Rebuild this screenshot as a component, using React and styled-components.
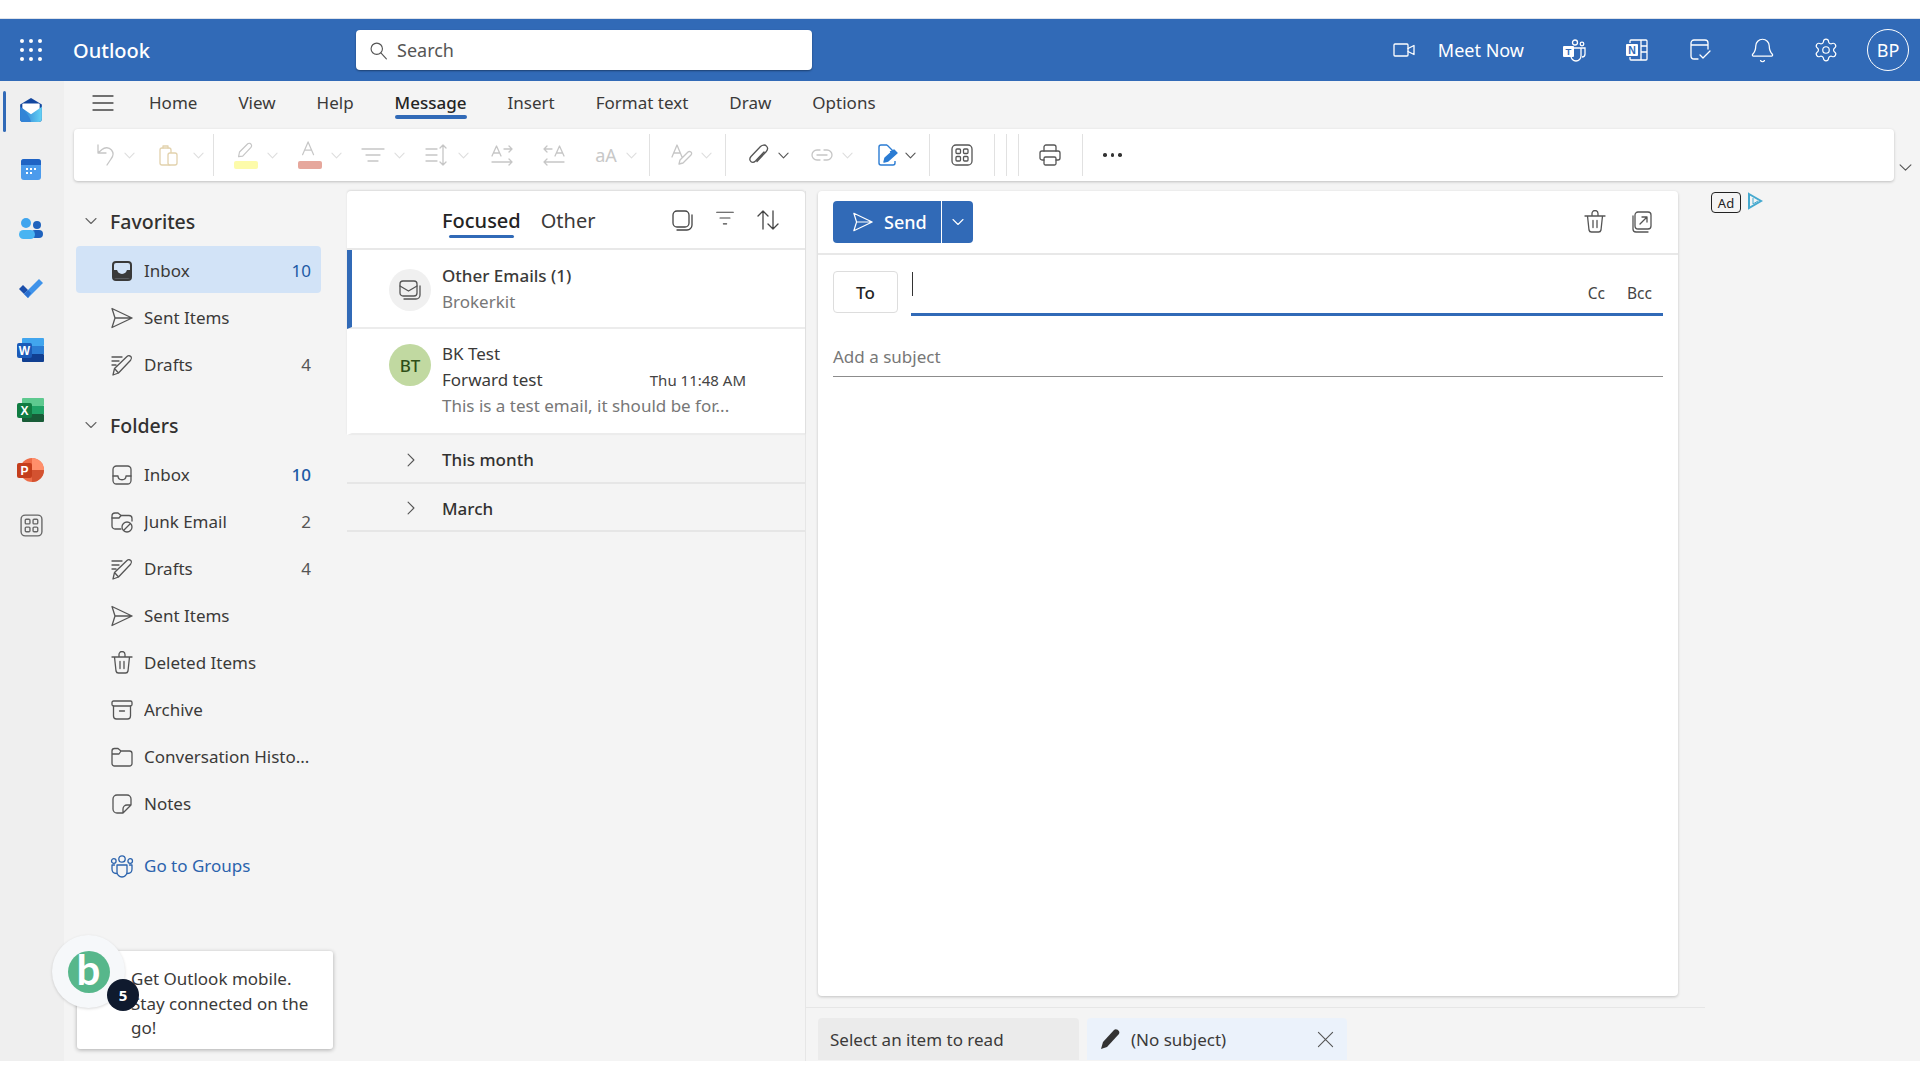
import React from 'react';
import styled, { createGlobalStyle } from 'styled-components';
import { Bell, Settings } from 'lucide-react';

const GlobalStyle = createGlobalStyle`
    html, body {
        margin: 0;
        padding: 0;
        background: #fff;
    }
    * {
        box-sizing: border-box;
    }
    #root {
        font-family: "Noto Sans", "Open Sans", "Liberation Sans", sans-serif;
        color: #323130;
    }
`;

const BLUE = '#316ab7';
const GRAY = '#c6c6c6';
const PALE = '#dedede';

// line icons, all on a 24 grid
const paths = {
    search: <><circle cx="10" cy="10" r="6.5" /><path d="M15 15l6 6.5" /></>,
    camera: <><rect x="2" y="6" width="14" height="12" rx="1" /><path d="M16 10.5l6-3v9l-6-3" /></>,
    menu: <path d="M2 5h20M2 12h20M2 19h20" />,
    chevDown: <path d="M2 7l10 10L22 7" />,
    chevRight: <path d="M7 2l10 10L7 22" />,
    close: <path d="M2 2l20 20M22 2L2 22" />,
    undo: <path d="M4 2v8h8M4 10l4-3.500c3-2.600 7-2.200 9.500.5 2.500 3 1.500 6.500-.5 9l-4 6" />,
    clipboard: <><rect x="3" y="5" width="11" height="17" rx="2" /><rect x="11" y="10" width="9" height="12" rx="2" fill="#fff" /><path d="M6 5V3h5v2" /></>,
    pen: <path d="M5 17l1-5L15 3c1.400-1.200 3.500-.2 4 1 .5 1 .2 2-.5 3L9.500 16.500z" />,
    fontA: <path d="M5 15L11 1l6 14M7 10h8" />,
    align: <path d="M1 6h22M5 12h14M7 18h10" />,
    spacing: <path d="M1 6h11M1 12h11M1 18h11M18 2v20M15 5l3-3 3 3M15 19l3 3 3-3" />,
    aRight: <path d="M2 13L6.500 3 11 13M3.500 10h6M14 6h8M19 3l3 3-3 3M2 19h20M19 16l3 3-3 3" />,
    aLeft: <path d="M13 13l4.500-10L22 13M14.500 10h6M10 6H2M5 3L2 6l3 3M2 19h20M5 16l-3 3 3 3" />,
    textStyle: <path d="M2 14L7 2l5 12M4 10h6M9 21l1-4 8-8c1.200-1 3-.4 3.500.8.300.8.200 1.600-.5 2.200l-8 8z" />,
    clip: <path d="M18 9l-8.500 9c-1.500 1.500-3.500 1.500-4.700.4C3.500 17 3.700 15 5 13.500L14.500 3.500c2-2 4.800-1.800 6-.4 1.300 1.400 1.300 3.800-.4 5.600L11 18.500" />,
    link: <><path d="M10 7H7a5 5 0 0 0 0 10h3M14 7h3a5 5 0 0 1 0 10h-3" /><path d="M7 12h10" /></>,
    apps: <><rect x="2" y="2" width="20" height="20" rx="4" /><rect x="6" y="6" width="4.500" height="4.500" rx="1" /><rect x="13.500" y="6" width="4.500" height="4.500" rx="1" /><rect x="6" y="13.500" width="4.500" height="4.500" rx="1" /><rect x="13.500" y="13.500" width="4.500" height="4.500" rx="1" /></>,
    print: <><path d="M6 8V4a2 2 0 0 1 2-2h8a2 2 0 0 1 2 2v4" /><path d="M6 17H4a2 2 0 0 1-2-2v-5a2 2 0 0 1 2-2h16a2 2 0 0 1 2 2v5a2 2 0 0 1-2 2h-2" /><rect x="6" y="14" width="12" height="8" rx="1.500" /></>,
    send: <path d="M2 2.500L22 12 2 21.500 5 12zM5 12h17" />,
    inbox: <><rect x="3" y="3" width="18" height="18" rx="3.500" /><path d="M3 13h5c0 5 8 5 8 0h5" /></>,
    drafts: <path d="M2 4h10M2 8h7M2 12h4M3 22l1.500-6.500L17 3.500c1.400-1.300 3.200-.8 4 .2.800 1.200.6 2.500-.4 3.500L8.500 20zM4.500 15.500l4 4.500" />,
    junk: <><path d="M11 19H5a3 3 0 0 1-3-3V6a3 3 0 0 1 3-3h3l3 2.500h8a3 3 0 0 1 3 3V11" /><circle cx="17" cy="17" r="5" /><path d="M14 20l6-6M2 8h7l2-2.500" /></>,
    trash: <path d="M2 6h20M9 6V3.500a3 3 0 0 1 6 0V6M4.500 6l1.500 14a2.500 2.500 0 0 0 2.500 2h7a2.500 2.500 0 0 0 2.500-2l1.500-14M10 10.500v7M14 10.500v7" />,
    archive: <><rect x="2" y="3" width="20" height="5" rx="1.500" /><path d="M3.500 8v10a3 3 0 0 0 3 3h11a3 3 0 0 0 3-3V8M9.500 13h5" /></>,
    folder: <path d="M2 6a2.500 2.500 0 0 1 2.500-2.500H8L11 6h8.500A2.500 2.500 0 0 1 22 8.500v10a2.500 2.500 0 0 1-2.500 2.500h-15A2.500 2.500 0 0 1 2 18.500zM2 9h7l2-3" />,
    note: <path d="M13 21H7a4 4 0 0 1-4-4V7a4 4 0 0 1 4-4h10a4 4 0 0 1 4 4v6zM21 13h-4a4 4 0 0 0-4 4v4" />,
    groups: <><circle cx="12" cy="5" r="3.200" /><circle cx="3.800" cy="7" r="2.300" /><circle cx="20.200" cy="7" r="2.300" /><path d="M7 11h10v7a5 5 0 0 1-10 0zM4.500 11H2v4c0 3 2 4.500 4.500 4.500M19.500 11H22v4c0 3-2 4.500-4.500 4.500" /></>,
    sweep: <><rect x="3" y="3" width="16" height="16" rx="4" /><path d="M22 7v10a5 5 0 0 1-5 5H7" /></>,
    filter: <path d="M2 5h20M6 12h12M10 19h4" />,
    sort: <path d="M7 21V3M2 8l5-5 5 5M17 3v18M12 16l5 5 5-5" />,
    envelope: <><rect x="2" y="3" width="17" height="15" rx="3" /><path d="M2 8l8.500 5L19 8" /><path d="M22 8v9a4 4 0 0 1-4 4H6" /></>,
    popout: <><rect x="5" y="2" width="16" height="17" rx="3" /><path d="M3 6v13a3 3 0 0 0 3 3h12M10 14l7-7M12 7h5v5" /></>,
    todoHead: <><path d="M10 21H6a3 3 0 0 1-3-3V5a3 3 0 0 1 3-3h11a3 3 0 0 1 3 3v6M3 7h17" /><path d="M12 17l3 3 7-7" /></>,
};

const Glyph = styled.svg`
    flex: none;
    width: ${p => p.$size || 24}px;
    height: ${p => p.$size || 24}px;
    color: ${p => p.$color || 'currentColor'};
    fill: none;
    stroke: currentColor;
    stroke-width: ${p => p.$weight || 1.3};
    stroke-linecap: round;
    stroke-linejoin: round;
`;

const Icon = ({ name, size, color, weight }) => (
    <Glyph viewBox="0 0 24 24" $size={size} $color={color} $weight={weight}>{paths[name]}</Glyph>
);

const Chev = ({ name = 'chevDown', size = 11, color }) => (
    <Icon name={name} size={size} color={color} weight={(24 / size) * 1.1} />
);

const Page = styled.div`
    width: 1920px;
    height: 1080px;
    overflow: hidden;
    display: flex;
    flex-direction: column;
    background: #fff;
`;

const TopStrip = styled.div`
    height: 19px;
    flex: none;
    border-bottom: 1px solid #dfe3ea;
`;

const BottomStrip = styled.div`
    height: 19px;
    flex: none;
`;

const Header = styled.header`
    height: 62px;
    flex: none;
    background: ${BLUE};
    display: flex;
    align-items: center;
    color: #fff;
`;

const Waffle = styled.div`
    width: 22px;
    margin-left: 20px;
    display: grid;
    grid-template-columns: repeat(3, 4px);
    gap: 5px;
    span {
        width: 4px;
        height: 4px;
        border-radius: 50%;
        background: #fff;
    }
`;

const Brand = styled.div`
    margin-left: 31px;
    width: 283px;
    font-size: 20px;
    font-weight: 500;
`;

const SearchBox = styled.div`
    width: 456px;
    height: 40px;
    background: #fff;
    border-radius: 4px;
    box-shadow: 0 1px 2px rgba(0, 0, 0, .4);
    display: flex;
    align-items: center;
    gap: 8px;
    padding-left: 12px;
    color: #555;
    font-size: 18px;
`;

const HeaderTools = styled.div`
    margin-left: auto;
    margin-right: 11px;
    display: flex;
    align-items: center;
`;

const MeetNow = styled.div`
    display: flex;
    align-items: center;
    gap: 22px;
    font-size: 18px;
    margin-right: 18px;
`;

const HeaderIcon = styled.div`
    width: 63px;
    display: flex;
    justify-content: center;
`;

const Avatar = styled.div`
    width: 42px;
    height: 42px;
    margin-left: 10px;
    border-radius: 50%;
    border: 1.5px solid #fff;
    display: flex;
    align-items: center;
    justify-content: center;
    font-size: 18px;
`;

const Body = styled.div`
    flex: 1;
    min-height: 0;
    display: flex;
    background: #f4f4f4;
`;

const Rail = styled.nav`
    width: 64px;
    flex: none;
    background: #efefef;
    position: relative;
    display: flex;
    flex-direction: column;
    align-items: center;
    padding: 16px 2px 0 0;
`;

const RailActive = styled.i`
    position: absolute;
    left: 3px;
    top: 10px;
    width: 3px;
    height: 41px;
    border-radius: 2px;
    background: ${BLUE};
`;

const RailItem = styled.div`
    height: ${p => p.$h || 60}px;
    display: flex;
`;

const Main = styled.div`
    flex: 1;
    min-width: 0;
    display: flex;
    flex-direction: column;
`;

const Tabs = styled.div`
    height: 48px;
    flex: none;
    display: flex;
    align-items: center;
    padding: 0 0 5px 27px;
    font-size: 17px;
`;

const Tab = styled.div`
    position: relative;
    margin-left: ${p => p.$left}px;
    font-weight: ${p => (p.$active ? 500 : 400)};
    color: ${p => (p.$active ? '#242424' : '#3b3a39')};
    ${p => p.$active && `
        &::after {
            content: "";
            position: absolute;
            left: 0;
            right: 0;
            bottom: -5px;
            height: 4px;
            border-radius: 2px;
            background: ${BLUE};
        }
    `}
`;

const ToolbarRow = styled.div`
    display: flex;
    flex: none;
    padding-left: 10px;
    align-items: flex-end;
`;

const Toolbar = styled.div`
    width: 1820px;
    height: 52px;
    background: #fff;
    border-radius: 4px;
    box-shadow: 0 1px 3px rgba(0, 0, 0, .22);
    display: flex;
    align-items: center;
    padding-left: 20px;
`;

const ToolbarFold = styled.div`
    margin: 0 0 7px 5px;
    display: flex;
`;

const Tool = styled.div`
    width: ${p => p.$w}px;
    display: flex;
    align-items: center;
    gap: ${p => p.$gap || 0}px;
    color: ${p => p.$color || GRAY};
`;

const Sep = styled.i`
    width: 1px;
    height: 42px;
    flex: none;
    background: #e1e1e1;
    margin-right: ${p => p.$after ?? 20}px;
`;

const Swatch = styled.span`
    position: relative;
    display: flex;
    width: 24px;
    height: 28px;
    align-items: flex-start;
    &::after {
        content: "";
        position: absolute;
        left: 0;
        bottom: 0;
        width: 24px;
        height: 8px;
        border-radius: 2px;
        background: ${p => p.$color};
    }
`;

const AaLabel = styled.span`
    width: 24px;
    font-size: 18px;
    color: #c8c8c8;
    text-align: center;
`;

const Dots = styled.div`
    display: flex;
    gap: 4px;
    span {
        width: 3.500px;
        height: 3.500px;
        border-radius: 50%;
        background: #333;
    }
`;

const Panes = styled.div`
    flex: 1;
    min-height: 0;
    display: flex;
    padding-top: 10px;
`;

const NavPane = styled.aside`
    position: relative;
    width: 283px;
    flex: none;
    padding: 8px 0 0 12px;
`;

const NavHeading = styled.div`
    height: 46px;
    margin: ${p => p.$top || 0}px 0 1px;
    display: flex;
    align-items: center;
    padding: 0 0 2px 9px;
    gap: 13px;
    font-size: 19.500px;
    font-weight: 500;
    color: #323130;
`;

const NavRow = styled.div`
    width: 245px;
    height: 47px;
    margin-top: ${p => p.$top || 0}px;
    padding: 2px 10px 0 34px;
    display: flex;
    align-items: center;
    gap: 10px;
    border-radius: 4px;
    font-size: 17px;
    background: ${p => (p.$selected ? '#d2e3f7' : 'transparent')};
    color: ${p => p.$color || '#3b3a39'};
    svg {
        color: ${p => p.$color || '#555'};
    }
`;

const NavLabel = styled.span`
    white-space: nowrap;
    overflow: hidden;
    text-overflow: ellipsis;
`;

const Count = styled.b`
    margin-left: auto;
    font-weight: ${p => (p.$strong ? 500 : 400)};
    color: ${p => p.$color || '#555'};
`;

const FilledInbox = styled.div`
    width: 20px;
    margin: 0 2px;
    height: 20px;
    border-radius: 4px;
    flex: none;
    background: linear-gradient(#3a3a3a 0 0) 0 100% / 100% 55% no-repeat;
    border: 2px solid #3a3a3a;
    position: relative;
    &::after {
        content: "";
        position: absolute;
        left: 3px;
        top: 6px;
        width: 10px;
        height: 5px;
        border-radius: 0 0 6px 6px;
        background: #d2e3f7;
    }
`;

const MobileCard = styled.div`
    position: absolute;
    left: 13px;
    bottom: 12px;
    width: 256px;
    height: 98px;
    background: #fff;
    border-radius: 3px;
    box-shadow: 0 1px 4px rgba(0, 0, 0, .3);
    padding: 16px 10px 0 54px;
    font-size: 17px;
    line-height: 24.500px;
    color: #3b3a39;
`;

const BubbleRing = styled.div`
    position: absolute;
    left: -25px;
    top: -16px;
    width: 73px;
    height: 73px;
    border-radius: 50%;
    background: #f6f8fa;
    box-shadow: 0 1px 3px rgba(0, 0, 0, .15);
    display: flex;
    align-items: center;
    justify-content: center;
`;

const BubbleLogo = styled.div`
    width: 42px;
    height: 42px;
    border-radius: 50%;
    background: #57b78b;
    color: #fff;
    font-size: 42px;
    font-weight: 700;
    line-height: 37px;
    text-align: center;
    font-family: "Lato", sans-serif;
`;

const BubbleBadge = styled.div`
    position: absolute;
    left: 55px;
    top: 44px;
    width: 32px;
    height: 32px;
    border-radius: 50%;
    background: #0f1a2e;
    color: #fff;
    font-size: 15px;
    font-weight: 700;
    display: flex;
    align-items: center;
    justify-content: center;
`;

const ListPane = styled.section`
    width: 459px;
    flex: none;
    border-right: 1px solid #e6e6e6;
`;

const ListCard = styled.div`
    background: #fff;
    border-radius: 4px 4px 0 0;
    box-shadow: 0 -1px 2px rgba(0, 0, 0, .1);
`;

const ListHead = styled.div`
    height: 59px;
    display: flex;
    align-items: center;
    padding: 1px 25px 0 95px;
    border-bottom: 2px solid #e8e8e8;
    color: #444;
`;

const Pivot = styled.div`
    position: relative;
    font-size: 20px;
    margin-right: ${p => p.$right}px;
    font-weight: ${p => (p.$active ? 500 : 400)};
    color: ${p => (p.$active ? '#242424' : '#3b3a39')};
    ${p => p.$active && `
        &::after {
            content: "";
            position: absolute;
            left: 7px;
            right: 7px;
            bottom: -4px;
            height: 3px;
            border-radius: 2px;
            background: ${BLUE};
        }
    `}
`;

const ListTools = styled.div`
    margin-left: auto;
    display: flex;
    gap: 21px;
`;

const MailRow = styled.div`
    height: ${p => p.$h}px;
    display: flex;
    border-left: 5px solid ${p => (p.$unread ? BLUE : '#fff')};
    border-bottom: 2px solid #ececec;
    padding-left: 37px;
`;

const MailAvatar = styled.div`
    width: 42px;
    height: 42px;
    margin-top: ${p => p.$top}px;
    flex: none;
    border-radius: 50%;
    display: flex;
    align-items: center;
    justify-content: center;
    background: ${p => p.$bg};
    color: #2f4f17;
    font-size: 17px;
    font-weight: 500;
`;

const MailText = styled.div`
    margin-left: 11px;
    padding-top: ${p => p.$top}px;
    width: 304px;
    font-size: 17px;
    line-height: 26px;
`;

const MailLine = styled.div`
    display: flex;
    justify-content: space-between;
    white-space: nowrap;
    font-weight: ${p => (p.$bold ? 500 : 400)};
    color: ${p => p.$color || '#3b3a39'};
    small {
        font-size: 15px;
        color: #444;
    }
`;

const GroupRow = styled.div`
    height: ${p => p.$h}px;
    display: flex;
    align-items: center;
    border-bottom: 2px solid #e6e6e6;
    padding: 2px 0 0 57px;
    gap: 24px;
    font-size: 17px;
    font-weight: 500;
    color: #323130;
`;

const ReadingPane = styled.section`
    width: 899px;
    flex: none;
    display: flex;
    flex-direction: column;
`;

const ComposeCard = styled.div`
    width: 860px;
    height: 805px;
    margin-left: 12px;
    background: #fff;
    border-radius: 4px;
    box-shadow: 0 1px 3px rgba(0, 0, 0, .2);
`;

const ComposeHead = styled.div`
    height: 64px;
    display: flex;
    align-items: center;
    padding: 0 24px 0 15px;
    border-bottom: 2px solid #e8e8e8;
    color: #555;
`;

const SendButton = styled.div`
    width: 140px;
    height: 42px;
    border-radius: 4px;
    background: ${BLUE};
    color: #fff;
    display: flex;
    align-items: center;
    font-size: 18px;
    font-weight: 500;
`;

const SendMain = styled.div`
    width: 109px;
    height: 100%;
    display: flex;
    align-items: center;
    gap: 10px;
    padding-left: 19px;
    border-right: 1px solid #fff;
`;

const SendMore = styled.div`
    flex: 1;
    display: flex;
    justify-content: center;
`;

const HeadActions = styled.div`
    margin-left: auto;
    display: flex;
    gap: 23px;
`;

const ToLine = styled.div`
    display: flex;
    padding: 16px 15px 0;
    gap: 13px;
`;

const ToButton = styled.div`
    width: 65px;
    height: 42px;
    flex: none;
    border: 1px solid #ddd;
    border-radius: 4px;
    display: flex;
    align-items: center;
    justify-content: center;
    font-size: 17px;
    font-weight: 500;
    color: #242424;
`;

const ToField = styled.div`
    position: relative;
    flex: 1;
    height: 45px;
    border-bottom: 3px solid ${BLUE};
    display: flex;
    align-items: flex-end;
    justify-content: flex-end;
    gap: 22px;
    padding: 0 11px 11px 0;
    font-size: 15.500px;
    line-height: 18px;
    color: #444;
    &::before {
        content: "";
        position: absolute;
        left: 1px;
        top: 1px;
        width: 1px;
        height: 24px;
        background: #333;
    }
`;

const SubjectLine = styled.div`
    margin: 20px 15px 0;
    height: 41px;
    display: flex;
    align-items: center;
    border-bottom: 1.5px solid #8c8c8c;
    font-size: 17px;
    color: #777;
`;

const BottomBar = styled.div`
    margin-top: 11px;
    flex: 1;
    border-top: 1px solid #e6e6e6;
    padding: 10px 0 0 12px;
    display: flex;
    gap: 8px;
`;

const BottomTab = styled.div`
    width: ${p => p.$w}px;
    height: 42px;
    border-radius: 4px 4px 0 0;
    background: ${p => p.$bg};
    display: flex;
    align-items: center;
    gap: 10px;
    padding: 0 12px;
    font-size: 17px;
    color: #3b3a39;
`;

const TabClose = styled.span`
    margin: 0 1px 0 auto;
    display: flex;
    color: #555;
`;

const AdSlot = styled.div`
    margin: 1px 0 0 6px;
    display: flex;
    align-items: flex-start;
    gap: 6px;
`;

const AdBox = styled.div`
    width: 30px;
    height: 21px;
    border: 1px solid #222;
    border-radius: 4px;
    font-size: 13px;
    display: flex;
    align-items: center;
    justify-content: center;
    color: #222;
`;

// brand marks
const MailMark = () => (
    <svg width="26" height="26" viewBox="0 0 24 24">
        <defs>
            <linearGradient id="mailFront" x1="0" x2="1" y1="0" y2="0">
                <stop offset="0" stopColor="#2a78d0" />
                <stop offset="1" stopColor="#64d2f5" />
            </linearGradient>
        </defs>
        <path d="M12 1l10 6v13a3 3 0 0 1-3 3H5a3 3 0 0 1-3-3V7z" fill="#13479f" />
        <path d="M5 6h14a1 1 0 0 1 1 1v7l-8 4-8-4V7a1 1 0 0 1 1-1z" fill="#fff" />
        <path d="M2 9l10 7 10-7v11a3 3 0 0 1-3 3H5a3 3 0 0 1-3-3z" fill="url(#mailFront)" />
        <path d="M2 9c6 6 9 9 10 14H5a3 3 0 0 1-3-3z" fill="#3384d6" />
    </svg>
);

const CalendarMark = () => (
    <svg width="24" height="24" viewBox="0 0 24 24">
        <rect x="2" y="2" width="20" height="21" rx="3" fill="#4c9bec" />
        <path d="M2 8V5a3 3 0 0 1 3-3h14a3 3 0 0 1 3 3v3z" fill="#1f63c4" />
        <g fill="#fff">
            <rect x="7" y="11" width="2" height="2" />
            <rect x="11" y="11" width="2" height="2" />
            <rect x="15" y="11" width="2" height="2" />
            <rect x="7" y="15" width="2" height="2" />
            <rect x="11" y="15" width="2" height="2" />
        </g>
    </svg>
);

const PeopleMark = () => (
    <svg width="26" height="24" viewBox="0 0 26 24">
        <circle cx="8" cy="6" r="5" fill="#3fa5ee" />
        <circle cx="19" cy="8" r="4" fill="#1f62bd" />
        <rect x="13" y="13" width="12" height="8" rx="4" fill="#1f62bd" />
        <rect x="1" y="13" width="16" height="9" rx="4.500" fill="#49b4f2" />
    </svg>
);

const TodoMark = () => (
    <svg width="26" height="24" viewBox="0 0 26 24">
        <path d="M1 12l4-4 5 5-4 4z" fill="#1b4eaa" />
        <path d="M6 17L21 2l4 4L10 21z" fill="#3f93ea" />
        <path d="M6 17l4-4 3 3-3 5z" fill="#2a6fd0" />
    </svg>
);

const OfficeMark = ({ letter, dark, mid, light, tile, round }) => (
    <svg width="28" height="26" viewBox="0 0 28 26">
        {round ? (
            <>
                <circle cx="15" cy="13" r="12" fill={mid} />
                <path d="M15 1a12 12 0 0 1 12 12H15z" fill={light} />
                <path d="M15 13h12a12 12 0 0 1-12 12z" fill={dark} />
            </>
        ) : (
            <>
                <rect x="5" y="1" width="22" height="8" rx="1" fill={light} />
                <rect x="5" y="9" width="22" height="8" fill={mid} />
                <rect x="5" y="17" width="22" height="8" rx="1" fill={dark} />
            </>
        )}
        <rect x="0" y="6" width="15" height="15" rx="2" fill={tile} />
        <text x="7.500" y="18" textAnchor="middle" fontSize="12" fontWeight="700" fill="#fff" fontFamily="Liberation Sans, sans-serif">{letter}</text>
    </svg>
);

const TeamsMark = () => (
    <svg width="24" height="24" viewBox="0 0 24 24" fill="none" stroke="#fff" strokeWidth="1.300">
        <circle cx="13" cy="4.500" r="2.500" />
        <circle cx="20" cy="6" r="1.800" />
        <path d="M18 10h5v6c0 2-1.500 3-3 3M9 12v6a5 5 0 0 0 10 0v-8h-7" />
        <rect x="1" y="8" width="11" height="11" rx="1" fill="#fff" stroke="none" />
        <text x="6.500" y="17" textAnchor="middle" fontSize="9.500" fontWeight="700" fill="#316ab7" stroke="none" fontFamily="Liberation Sans, sans-serif">T</text>
    </svg>
);

const OneNoteMark = () => (
    <svg width="24" height="24" viewBox="0 0 24 24" fill="none" stroke="#fff" strokeWidth="1.300">
        <path d="M5 5V3a1 1 0 0 1 1-1h15a1 1 0 0 1 1 1v18a1 1 0 0 1-1 1H6a1 1 0 0 1-1-1v-2M16 2v20M16 8h6M16 14h6" />
        <rect x="1" y="6" width="12" height="12" rx="1" fill="#fff" stroke="none" />
        <text x="7" y="15.800" textAnchor="middle" fontSize="10.500" fontWeight="700" fill="#316ab7" stroke="none" fontFamily="Liberation Sans, sans-serif">N</text>
    </svg>
);

const AdMark = () => (
    <svg width="16" height="18" viewBox="0 0 16 18" fill="none" stroke="#45a9cf" strokeWidth="2">
        <path d="M2 2l12 7-12 7z" />
        <path d="M6 6v6l5-3" strokeWidth="1" />
    </svg>
);

const tabs = ['Home', 'View', 'Help', 'Message', 'Insert', 'Format text', 'Draw', 'Options'];

const App = () => (
    <Page>
        <GlobalStyle />
        <TopStrip />
        <Header>
            <Waffle>{Array.from({ length: 9 }, (_, i) => <span key={i} />)}</Waffle>
            <Brand>Outlook</Brand>
            <SearchBox><Icon name="search" size={21} />Search</SearchBox>
            <HeaderTools>
                <MeetNow><Icon name="camera" size={24} />Meet Now</MeetNow>
                <HeaderIcon><TeamsMark /></HeaderIcon>
                <HeaderIcon><OneNoteMark /></HeaderIcon>
                <HeaderIcon><Icon name="todoHead" /></HeaderIcon>
                <HeaderIcon><Bell size={27} strokeWidth={1.1} /></HeaderIcon>
                <HeaderIcon><Settings size={26} strokeWidth={1.1} /></HeaderIcon>
                <Avatar>BP</Avatar>
            </HeaderTools>
        </Header>
        <Body>
            <Rail>
                <RailActive />
                <RailItem><MailMark /></RailItem>
                <RailItem><CalendarMark /></RailItem>
                <RailItem><PeopleMark /></RailItem>
                <RailItem><TodoMark /></RailItem>
                <RailItem><OfficeMark letter="W" tile="#1b5bb8" light="#41a5ee" mid="#2b7cd3" dark="#103f91" /></RailItem>
                <RailItem><OfficeMark letter="X" tile="#107c41" light="#5ec98f" mid="#21a366" dark="#185c37" /></RailItem>
                <RailItem $h={56}><OfficeMark round letter="P" tile="#c43e1c" light="#ff8f6b" mid="#ed6c47" dark="#d35230" /></RailItem>
                <RailItem><Icon name="apps" size={25} color="#666" /></RailItem>
            </Rail>
            <Main>
                <Tabs>
                    <Icon name="menu" size={24} color="#444" />
                    {tabs.map((name, i) => (
                        <Tab key={name} $left={i === 0 ? 34 : 41} $active={name === 'Message'}>{name}</Tab>
                    ))}
                </Tabs>
                <ToolbarRow>
                    <Toolbar>
                        <Tool $w={63} $gap={6}><Icon name="undo" /><Chev color={PALE} /></Tool>
                        <Tool $w={56} $gap={12}><Icon name="clipboard" color="#e2d2ad" /><Chev color={PALE} /></Tool>
                        <Sep />
                        <Tool $w={64} $gap={9}><Swatch $color="#fdfbaa"><Icon name="pen" size={22} /></Swatch><Chev color={PALE} /></Tool>
                        <Tool $w={63} $gap={9}><Swatch $color="#e6a79c"><Icon name="fontA" size={22} /></Swatch><Chev color={PALE} /></Tool>
                        <Tool $w={64} $gap={9}><Icon name="align" /><Chev color={PALE} /></Tool>
                        <Tool $w={65} $gap={9}><Icon name="spacing" /><Chev color={PALE} /></Tool>
                        <Tool $w={52}><Icon name="aRight" /></Tool>
                        <Tool $w={52}><Icon name="aLeft" /></Tool>
                        <Tool $w={55} $gap={8}><AaLabel>aA</AaLabel><Chev color={PALE} /></Tool>
                        <Sep />
                        <Tool $w={55} $gap={7}><Icon name="textStyle" /><Chev color={PALE} /></Tool>
                        <Sep />
                        <Tool $w={64} $gap={8} $color="#555"><Icon name="clip" /><Chev /></Tool>
                        <Tool $w={65} $gap={8}><Icon name="link" /><Chev color={PALE} /></Tool>
                        <Tool $w={54} $gap={6} $color="#555">
                            <svg width="24" height="24" viewBox="0 0 24 24" fill="none" stroke="#2b7cd3" strokeWidth="1.400" strokeLinejoin="round">
                                <path d="M12 2H6a2 2 0 0 0-2 2v16a2 2 0 0 0 2 2h12a2 2 0 0 0 2-2v-2" />
                                <path d="M12 2l6 6-3 1" />
                                <path d="M9 19l1-4 9-8 3 3-9 8z" fill="#2b7cd3" />
                            </svg>
                            <Chev />
                        </Tool>
                        <Sep />
                        <Tool $w={44} $color="#555"><Icon name="apps" /></Tool>
                        <Sep $after={11} />
                        <Sep $after={11} />
                        <Sep $after={19} />
                        <Tool $w={44} $color="#555"><Icon name="print" /></Tool>
                        <Sep />
                        <Dots><span /><span /><span /></Dots>
                    </Toolbar>
                    <ToolbarFold><Chev size={13} color="#555" /></ToolbarFold>
                </ToolbarRow>
                <Panes>
                    <NavPane>
                        <NavHeading><Chev size={12} color="#666" />Favorites</NavHeading>
                        <NavRow $selected><FilledInbox /><NavLabel>Inbox</NavLabel><Count $color="#1d5aa5">10</Count></NavRow>
                        <NavRow><Icon name="send" /><NavLabel>Sent Items</NavLabel></NavRow>
                        <NavRow><Icon name="drafts" /><NavLabel>Drafts</NavLabel><Count>4</Count></NavRow>
                        <NavHeading $top={16}><Chev size={12} color="#666" />Folders</NavHeading>
                        <NavRow><Icon name="inbox" /><NavLabel>Inbox</NavLabel><Count $strong $color="#1d5aa5">10</Count></NavRow>
                        <NavRow><Icon name="junk" /><NavLabel>Junk Email</NavLabel><Count>2</Count></NavRow>
                        <NavRow><Icon name="drafts" /><NavLabel>Drafts</NavLabel><Count>4</Count></NavRow>
                        <NavRow><Icon name="send" /><NavLabel>Sent Items</NavLabel></NavRow>
                        <NavRow><Icon name="trash" /><NavLabel>Deleted Items</NavLabel></NavRow>
                        <NavRow><Icon name="archive" /><NavLabel>Archive</NavLabel></NavRow>
                        <NavRow><Icon name="folder" /><NavLabel>Conversation Histo...</NavLabel></NavRow>
                        <NavRow><Icon name="note" /><NavLabel>Notes</NavLabel></NavRow>
                        <NavRow $top={15} $color="#2b63ad"><Icon name="groups" /><NavLabel>Go to Groups</NavLabel></NavRow>
                        <MobileCard>
                            Get Outlook mobile. Stay connected on the go!
                            <BubbleRing><BubbleLogo>b</BubbleLogo><BubbleBadge>5</BubbleBadge></BubbleRing>
                        </MobileCard>
                    </NavPane>
                    <ListPane>
                        <ListCard>
                            <ListHead>
                                <Pivot $active $right={20}>Focused</Pivot>
                                <Pivot>Other</Pivot>
                                <ListTools>
                                    <Icon name="sweep" />
                                    <Icon name="filter" size={20} />
                                    <Icon name="sort" />
                                </ListTools>
                            </ListHead>
                            <MailRow $h={79} $unread>
                                <MailAvatar $top={19} $bg="#f0f0f0"><Icon name="envelope" color="#555" /></MailAvatar>
                                <MailText $top={13}>
                                    <MailLine $bold>Other Emails (1)</MailLine>
                                    <MailLine $color="#777">Brokerkit</MailLine>
                                </MailText>
                            </MailRow>
                            <MailRow $h={106}>
                                <MailAvatar $top={15} $bg="#c1d9a1">BT</MailAvatar>
                                <MailText $top={12}>
                                    <MailLine>BK Test</MailLine>
                                    <MailLine>Forward test<small>Thu 11:48 AM</small></MailLine>
                                    <MailLine $color="#777">This is a test email, it should be for...</MailLine>
                                </MailText>
                            </MailRow>
                        </ListCard>
                        <GroupRow $h={49}><Chev name="chevRight" size={14} color="#555" />This month</GroupRow>
                        <GroupRow $h={48}><Chev name="chevRight" size={14} color="#555" />March</GroupRow>
                    </ListPane>
                    <ReadingPane>
                        <ComposeCard>
                            <ComposeHead>
                                <SendButton>
                                    <SendMain><Icon name="send" size={22} />Send</SendMain>
                                    <SendMore><Chev size={12} /></SendMore>
                                </SendButton>
                                <HeadActions>
                                    <Icon name="trash" />
                                    <Icon name="popout" />
                                </HeadActions>
                            </ComposeHead>
                            <ToLine>
                                <ToButton>To</ToButton>
                                <ToField><span>Cc</span><span>Bcc</span></ToField>
                            </ToLine>
                            <SubjectLine>Add a subject</SubjectLine>
                        </ComposeCard>
                        <BottomBar>
                            <BottomTab $w={261} $bg="#ebebeb">Select an item to read</BottomTab>
                            <BottomTab $w={260} $bg="#ebf2fb">
                                <svg width="22" height="22" viewBox="0 0 22 22" fill="#333"><path d="M2 21l2-7L15 2c1.500-1.300 4-.5 5 1.300.6 1.200.4 2.200-.5 3.200L8 19z" /></svg>
                                (No subject)
                                <TabClose><Chev name="close" size={17} /></TabClose>
                            </BottomTab>
                        </BottomBar>
                    </ReadingPane>
                    <AdSlot>
                        <AdBox>Ad</AdBox>
                        <AdMark />
                    </AdSlot>
                </Panes>
            </Main>
        </Body>
        <BottomStrip />
    </Page>
);

export default App;
